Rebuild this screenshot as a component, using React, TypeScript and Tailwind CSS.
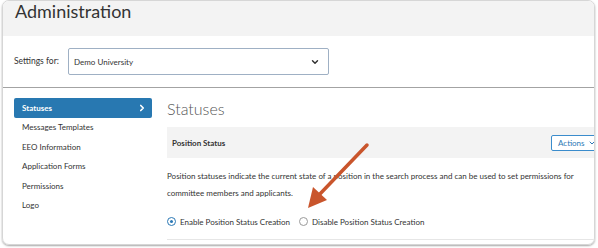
import { ChevronDown, ChevronRight } from "lucide-react"

const menu = ["Statuses", "Messages Templates", "EEO Information", "Application Forms", "Permissions", "Logo"]

export default function App() {
    return (
        <div className="relative w-[598px] h-[248px] bg-white overflow-hidden font-['Lato',sans-serif] text-[#333]">
            <div className="ml-[2px] mr-[3px] h-[245px] border border-[#d6d6d6] rounded-[7px] shadow-[0_1px_2px_rgba(0,0,0,0.35)] overflow-hidden flex flex-col">
                <div className="h-[35px] shrink-0 bg-[#f3f3f3] px-[12px]">
                    <h1 className="text-[18px] leading-[20px] text-[#333]">Administration</h1>
                </div>
                <div className="h-[52px] shrink-0 flex items-center px-[11px] border-b border-[#a3a3a3]">
                    <span className="text-[8.5px] w-[54px]">Settings for:</span>
                    <div className="w-[261px] h-[27px] border border-[#9fb0c4] rounded-[2px] flex items-center justify-between pl-[5px] pr-[8px]">
                        <span className="text-[8px]">Demo University</span>
                        <ChevronDown size={10} strokeWidth={3.5} className="text-[#333]" />
                    </div>
                </div>
                <div className="flex-1 flex">
                    <ul className="w-[164px] shrink-0 pl-[11px] pr-[15px] pt-[10px]">
                        {menu.map((item, i) =>
                            i === 0 ? (
                                <li key={item} className="h-[19.5px] bg-[#2878b1] rounded-[2px] flex items-center justify-between pl-[8px] pr-[5px] text-white font-bold text-[8px]">
                                    {item}
                                    <ChevronRight size={10} strokeWidth={4} />
                                </li>
                            ) : (
                                <li key={item} className="h-[19.5px] flex items-center pl-[8px] text-[8px]">{item}</li>
                            )
                        )}
                    </ul>
                    <div className="w-[445px] shrink-0 pt-[10px]">
                        <h2 className="text-[16px] leading-[22px] font-light text-[#555] h-[29px]">Statuses</h2>
                        <div className="h-[31px] bg-[#f3f3f3] flex items-center justify-between pl-[5px] pr-[5px]">
                            <span className="text-[8px] font-bold">Position Status</span>
                            <div className="w-[56px] h-[16px] border border-[#3b8ccc] rounded-[2px] bg-white flex items-center gap-[3px] pl-[6px] text-[8px] text-[#2b78b5]">
                                Actions
                                <ChevronDown size={8} strokeWidth={3} />
                            </div>
                        </div>
                        <p className="text-[8px] leading-[17px] mt-[10px] w-[415px]">
                            Position statuses indicate the current state of a position in the search process and can be used to set permissions for committee members and applicants.
                        </p>
                        <div className="flex items-center h-[36px] mt-[2px] pt-[4px] pb-[4px] text-[8px] border-b border-[#e6e6e6]">
                            <span className="w-[9px] h-[9px] rounded-full border-[1.5px] border-[#2b78b5] flex items-center justify-center mr-[4px]">
                                <span className="w-[3.5px] h-[3.5px] rounded-full bg-[#2b78b5]" />
                            </span>
                            <span className="mr-[9px]">Enable Position Status Creation</span>
                            <span className="w-[9px] h-[9px] rounded-full border border-[#9a9a9a] mr-[4px]" />
                            <span>Disable Position Status Creation</span>
                        </div>
                    </div>
                </div>
            </div>
            <svg className="absolute left-0 top-0" width="598" height="248" viewBox="0 0 598 248">
                <line x1="367" y1="145" x2="318" y2="196" stroke="#c9552c" strokeWidth="3.5" strokeLinecap="round" />
                <polygon points="308,208 313,187 327,200" fill="#c9552c" />
            </svg>
        </div>
    )
}
